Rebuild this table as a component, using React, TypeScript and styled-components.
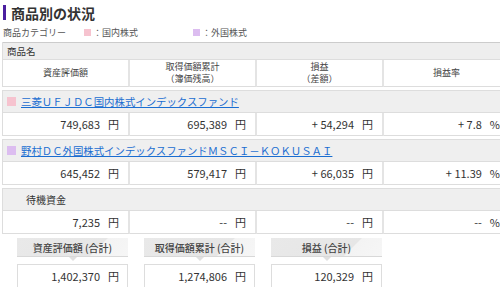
import styled, { createGlobalStyle } from 'styled-components';

const GlobalStyle = createGlobalStyle`
  html, body {
    margin: 0;
    padding: 0;
    background: #fff;
    overflow: hidden;
  }
  body {
    font-family: "Noto Sans CJK JP", "Liberation Sans", sans-serif;
    color: #333;
  }
`;

const Page = styled.div`
  width: 520px;
  padding-left: 2px;
`;

const Title = styled.h2`
  margin: 0;
  padding: 2px 0 0 1px;
  height: 21px;
  display: flex;
  align-items: center;
  gap: 5px;
  font-size: 14px;
  font-weight: 700;
  line-height: 18px;
  color: #333;

  &::before {
    content: '';
    width: 3px;
    height: 15px;
    background: #4b1fa0;
  }
`;

const Legend = styled.div`
  display: grid;
  grid-template-columns: 81px 109px auto;
  align-items: center;
  height: 16px;
  margin-top: 1px;
  margin-bottom: 2px;
  padding-left: 1px;
  font-size: 9px;
  color: #555;
`;

const LegendItem = styled.span`
  display: flex;
  align-items: center;
  gap: 2px;
`;

const Swatch = styled.span<{ $color: string; $size?: number }>`
  display: inline-block;
  width: ${(p) => p.$size ?? 7}px;
  height: ${(p) => p.$size ?? 7}px;
  background: ${(p) => p.$color};
  flex-shrink: 0;
`;

const Group = styled.div`
  display: grid;
  grid-template-columns: repeat(4, 127px);
  border-left: 1px solid #ddd;
  margin-bottom: 3px;
`;

const NameHead = styled.div`
  grid-column: 1 / -1;
  height: 16px;
  display: flex;
  align-items: center;
  padding-left: 4px;
  background: #eee;
  border-top: 1px solid #ccc;
  border-bottom: 1px solid #ddd;
  font-size: 9.5px;
  color: #333;
`;

const ColHead = styled.div`
  height: 26px;
  display: flex;
  flex-direction: column;
  align-items: center;
  justify-content: center;
  border-right: 2px solid #e4e4e4;
  border-bottom: 1px solid #ddd;
  font-size: 9px;
  line-height: 12px;
  color: #444;
  text-align: center;
`;

const FundRow = styled.div<{ $indent?: number }>`
  grid-column: 1 / -1;
  height: 21px;
  display: flex;
  align-items: center;
  gap: 5px;
  padding-left: ${(p) => p.$indent ?? 4}px;
  background: #efefef;
  border-top: 1px solid #ddd;
  border-bottom: 1px solid #ddd;
  font-size: 10px;
  color: #333;
`;

const FundLink = styled.a`
  color: #1a6dd1;
  text-decoration: underline;
  font-size: 10.4px;
  white-space: nowrap;
`;

const ValueCell = styled.div`
  height: 22px;
  display: flex;
  align-items: center;
  justify-content: flex-end;
  padding-right: 9px;
  border-right: 2px solid #e4e4e4;
  border-bottom: 1px solid #ddd;
  font-size: 11px;
  color: #333;
`;

const Unit = styled.span`
  margin-left: 8px;
`;

const Summary = styled.div`
  display: grid;
  grid-template-columns: repeat(3, 127px);
  margin-top: 4px;
`;

const SummaryCell = styled.div`
  padding-left: 15px;
`;

const SummaryLabel = styled.div`
  position: relative;
  width: 111px;
  height: 18px;
  display: flex;
  align-items: center;
  justify-content: center;
  background: linear-gradient(135deg, #e9e9e9 0%, #e6e6e6 70%, #f3f3f3 71%, #f6f6f6 100%);
  border-bottom: 1px solid #d8d8d8;
  font-size: 10px;
  font-weight: 500;
  color: #444;

  &::after {
    content: '';
    position: absolute;
    left: 50%;
    bottom: -5px;
    margin-left: -4px;
    border-left: 4px solid transparent;
    border-right: 4px solid transparent;
    border-top: 4px solid #e0e0e0;
  }
`;

const SummaryValue = styled.div`
  width: 111px;
  height: 24px;
  margin-top: 7px;
  display: flex;
  align-items: center;
  justify-content: flex-end;
  padding-right: 8px;
  box-sizing: border-box;
  border: 1px solid #ddd;
  font-size: 11px;
  color: #333;
`;

type Fund = {
  name: string;
  color: string;
  values: [string, string, string, string];
};

const funds: Fund[] = [
  {
    name: '三菱ＵＦＪＤＣ国内株式インデックスファンド',
    color: '#f6c3cf',
    values: ['749,683', '695,389', '+ 54,294', '+ 7.8'],
  },
  {
    name: '野村ＤＣ外国株式インデックスファンドＭＳＣＩ－ＫＯＫＵＳＡＩ',
    color: '#dcbdf0',
    values: ['645,452', '579,417', '+ 66,035', '+ 11.39'],
  },
];

function Values({ values }: { values: string[] }) {
  return (
    <>
      {values.map((v, i) => (
        <ValueCell key={i}>
          {v}
          <Unit>{i === 3 ? '%' : '円'}</Unit>
        </ValueCell>
      ))}
    </>
  );
}

export default function App() {
  return (
    <Page>
      <GlobalStyle />
      <Title>商品別の状況</Title>
      <Legend>
        <span>商品カテゴリー</span>
        <LegendItem>
          <Swatch $color="#f6c3cf" />：国内株式
        </LegendItem>
        <LegendItem>
          <Swatch $color="#dcbdf0" />：外国株式
        </LegendItem>
      </Legend>

      <Group>
        <NameHead>商品名</NameHead>
        <ColHead>資産評価額</ColHead>
        <ColHead>
          <span>取得価額累計</span>
          <span>（簿価残高）</span>
        </ColHead>
        <ColHead>
          <span>損益</span>
          <span>（差額）</span>
        </ColHead>
        <ColHead>損益率</ColHead>
      </Group>

      {funds.map((f) => (
        <Group key={f.name}>
          <FundRow>
            <Swatch $color={f.color} $size={9} />
            <FundLink href="#">{f.name}</FundLink>
          </FundRow>
          <Values values={f.values} />
        </Group>
      ))}

      <Group>
        <FundRow $indent={23}>待機資金</FundRow>
        <Values values={['7,235', '--', '--', '--']} />
      </Group>

      <Summary>
        <SummaryCell>
          <SummaryLabel>資産評価額 (合計)</SummaryLabel>
          <SummaryValue>
            1,402,370<Unit>円</Unit>
          </SummaryValue>
        </SummaryCell>
        <SummaryCell>
          <SummaryLabel>取得価額累計 (合計)</SummaryLabel>
          <SummaryValue>
            1,274,806<Unit>円</Unit>
          </SummaryValue>
        </SummaryCell>
        <SummaryCell>
          <SummaryLabel>損益 (合計)</SummaryLabel>
          <SummaryValue>
            120,329<Unit>円</Unit>
          </SummaryValue>
        </SummaryCell>
      </Summary>
    </Page>
  );
}
